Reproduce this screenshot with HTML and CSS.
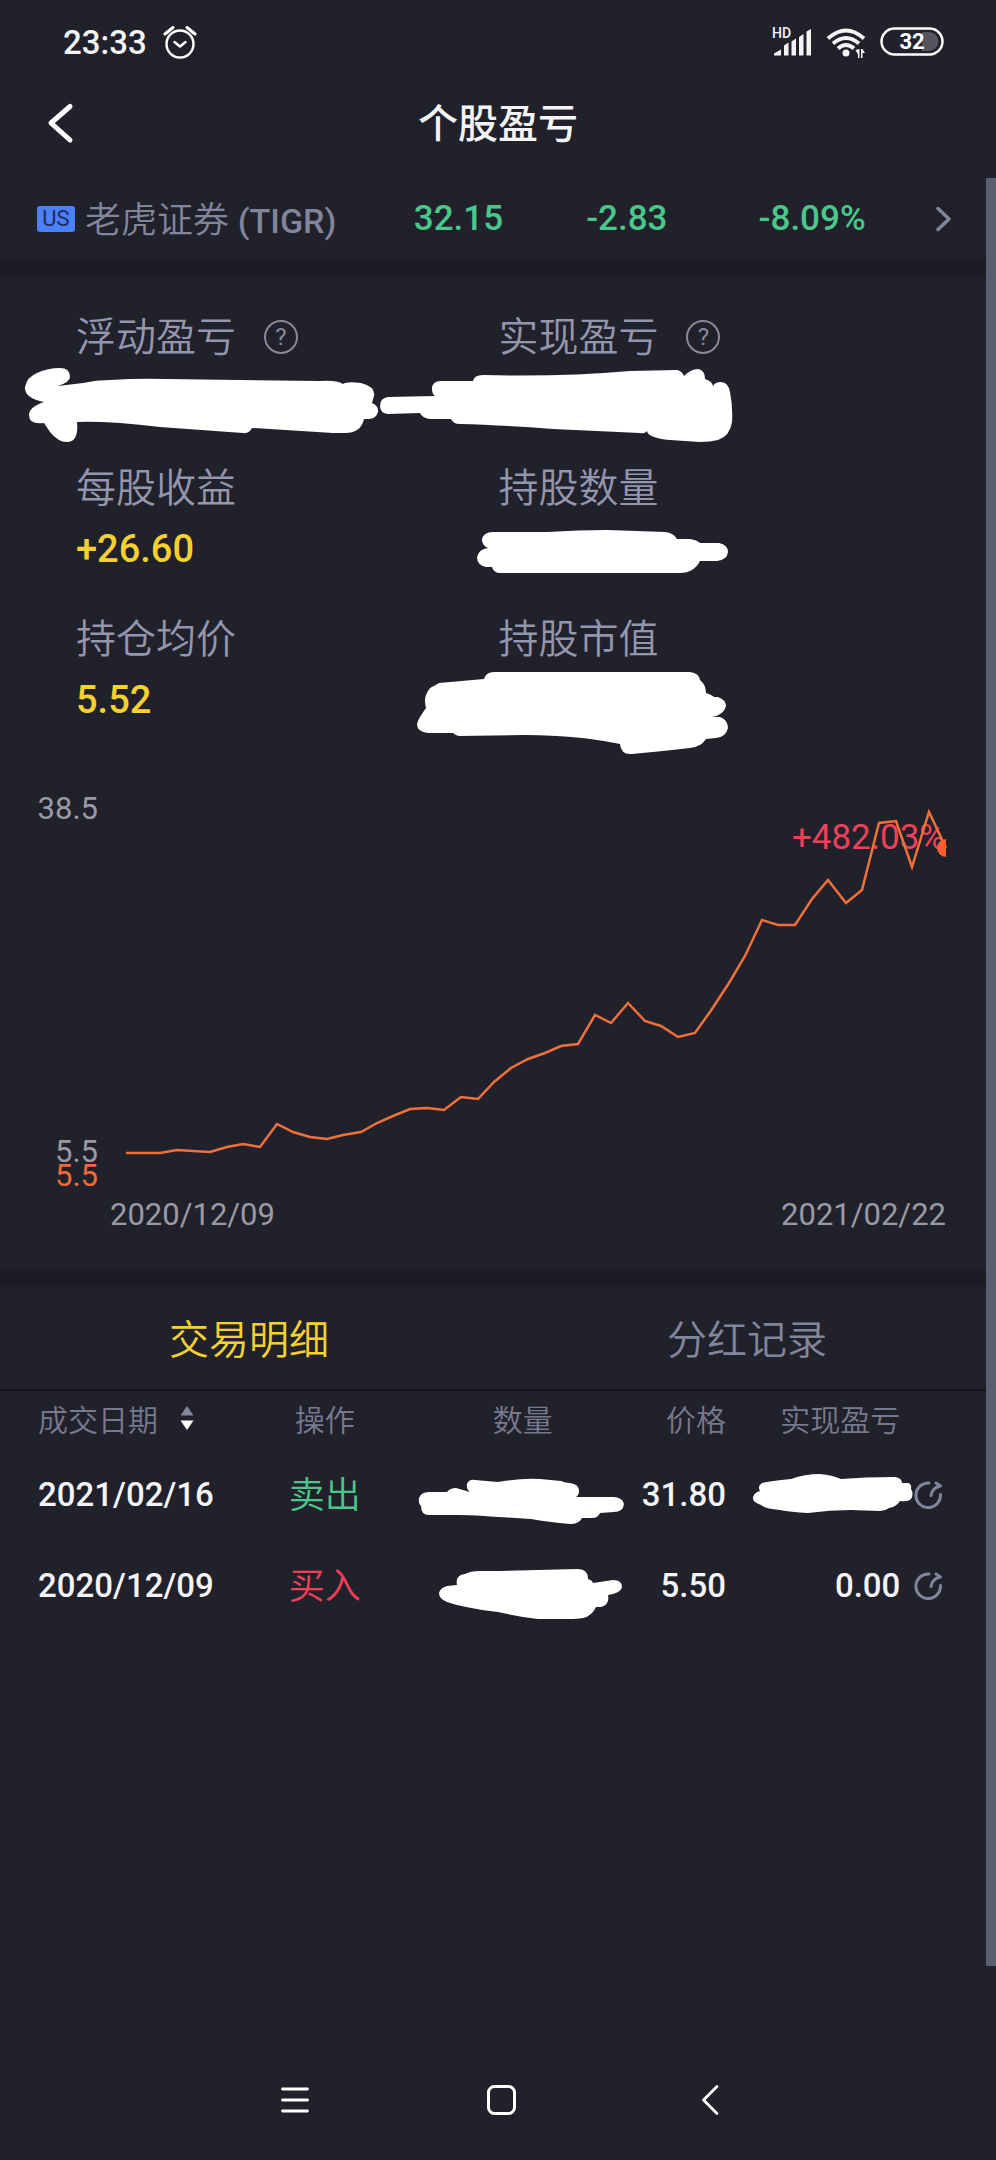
FILE: index.html
```html
<!DOCTYPE html>
<html lang="zh-CN">

	<head>
		<meta charset="UTF-8">
		<meta name="viewport" content="width=device-width, initial-scale=1">
		<title>个股盈亏</title>
		<link rel="stylesheet" href="styles.css">
	</head>

	<body>
		<!--状态栏-->
		<div class="status_bar">
			<span class="status_time">23:33</span>
			<svg class="alarm" width="34" height="34" viewBox="0 0 34 34" fill="none" stroke="#fff" stroke-width="2.4" stroke-linecap="round" stroke-linejoin="round">
				<circle cx="17" cy="19" r="13.5" />
				<path d="M11.500 17l5.500 4.500 5.500-4.500" />
				<path d="M2 9l8-6.500M32 9l-8-6.500" stroke-width="3" />
			</svg>
			<div class="status_icons">
				<svg width="40" height="32" viewBox="0 0 40 32" fill="#f4f4f4">
					<text class="hd" x="0" y="12">HD</text>
					<path d="M2 29.500v-2l7-4v6zM12 29.500v-10l4.500-3v13zM19.500 29.500v-14l4.500-3v17zM27 29.500v-18.500l4.500-3v21.500zM34.500 29.500v-24l4.500-2.500v26.500z" />
				</svg>
				<svg width="40" height="32" viewBox="0 0 40 32">
					<g fill="none" stroke="#f4f4f4" stroke-width="4">
						<path d="M2 12.500Q20 -3.500 38 12.500" />
						<path d="M7 17.500Q20 6.500 33 17.500" />
						<path d="M12 22.500Q20 15.500 28 22.500" />
					</g>
					<circle cx="20" cy="27" r="3.500" fill="#f4f4f4" />
					<path d="M29.500 24l4-1v9h-1.500v-3.500zM35 23h1.500l2.500 4h-2.500v5h-1.500z" fill="#f4f4f4" />
				</svg>
				<svg width="64" height="30" viewBox="0 0 64 30">
					<path d="M42 5h7a9.500 9.500 0 0 1 0 19h-7z" fill="#55555f" />
					<rect x="1.500" y="1.500" width="61" height="26" rx="13" fill="none" stroke="#fff" stroke-width="2.500" />
					<text class="battery" x="32" y="22">32</text>
				</svg>
			</div>
		</div>

		<!--标题栏-->
		<header class="title_bar">
			<button class="back" type="button" aria-label="返回">
				<svg width="28" height="42" viewBox="0 0 28 42" fill="none" stroke="#fff" stroke-width="5" stroke-linecap="round" stroke-linejoin="round">
					<path d="M24 4.500L5 21l19 17" />
				</svg>
			</button>
			<h1>个股盈亏</h1>
		</header>

		<main>
			<a class="stock" href="#">
				<span class="stock_name"><span class="market">US</span><span class="stock_title">老虎证券 <b>(TIGR)</b></span></span>
				<span class="quote">32.15</span>
				<span class="quote">-2.83</span>
				<span class="quote">-8.09%</span>
				<svg width="16" height="26" viewBox="0 0 16 26" fill="none" stroke="#83859b" stroke-width="3.500" stroke-linecap="round" stroke-linejoin="round">
					<path d="M3 2.500l11 10.500-11 10.500" />
				</svg>
			</a>

			<!--持仓盈亏-->
			<section class="panel">
				<dl class="stats">
					<div>
						<dt>浮动盈亏 <button class="help" type="button">?</button></dt>
						<dd>
							<svg class="mask mask_float" width="356" height="78" viewBox="24 367 356 78">
								<path d="M60 368Q70 368 70 377Q70 382 58 386L83 383Q96 380 110 380Q140 378 167 379L320 381Q337 380 343 384Q347 381 361 383Q376 387 374 396L372 403Q379 406 378 412Q376 419 369 419L364 419Q361 433 345 433L333 433L252 428Q249 434 243 433L160 427Q110 421 77 422Q79 442 67 442Q58 442 50 432L44 423Q29 425 29 415Q29 407 44 402Q24 398 25 387Q27 377 37 373Q48 368 60 368z" />
							</svg>
						</dd>
					</div>
					<div>
						<dt>实现盈亏 <button class="help" type="button">?</button></dt>
						<dd>
							<svg class="mask mask_real" width="354" height="76" viewBox="380 368 354 76">
								<path d="M388 397L435 396Q432 394 432 389Q432 381 441 381L473 381Q474 375 483 375Q560 377 630 371L677 370Q682 371 684 376Q691 369 698 369Q705 370 705 379Q712 381 713 386Q715 382 721 382Q728 382 730 392Q733 407 732 422Q730 436 718 440Q710 442 700 442L670 440Q648 438 647 431Q645 434 640 433L553 429Q500 425 460 424Q453 424 451 419L430 419Q422 418 420 413L388 414Q380 413 380 406Q380 398 388 397z" />
							</svg>
						</dd>
					</div>
					<div>
						<dt>每股收益</dt>
						<dd>+26.60</dd>
					</div>
					<div>
						<dt>持股数量</dt>
						<dd>
							<svg class="mask mask_count" width="254" height="46" viewBox="476 529 254 46">
								<path d="M488 548Q482 545 482 540Q483 532 493 532L547 532Q580 530 607 530L665 532Q674 533 677 539L690 539Q697 540 700 543L719 543Q728 545 728 552Q727 560 717 561L700 561Q694 573 680 573L657 573L500 573Q494 573 492 567L486 567Q477 565 477 557Q479 549 488 548z" />
							</svg>
						</dd>
					</div>
					<div>
						<dt>持仓均价</dt>
						<dd>5.52</dd>
					</div>
					<div>
						<dt>持股市值</dt>
						<dd>
							<svg class="mask mask_value" width="314" height="84" viewBox="416 671 314 84">
								<path d="M439 683L484 679Q486 672 494 672L690 672Q699 673 700 680Q706 685 706 693Q712 695 714 697L718 697Q726 700 726 706Q724 715 712 717L720 717Q728 720 728 728Q726 737 716 738L706 739Q701 747 690 748L663 751L632 754Q621 755 620 744Q585 737 557 736Q540 735 525 735L459 736Q456 736 453 733L428 733Q417 732 417 724Q418 719 426 708Q424 700 426 695Q429 687 434 686z" />
							</svg>
						</dd>
					</div>
				</dl>

				<!--收益走势-->
				<svg class="chart" viewBox="0 0 996 501">
					<g class="chart_label">
						<text x="98" y="49" text-anchor="end">38.5</text>
						<text x="98" y="392" text-anchor="end">5.5</text>
						<text class="cost" x="98" y="416" text-anchor="end">5.5</text>
						<text x="110" y="455">2020/12/09</text>
						<text x="946" y="455" text-anchor="end">2021/02/22</text>
					</g>
					<text class="rate" x="945" y="79" text-anchor="end">+482.03%</text>
					<polyline class="line" points="126,383 143,383 160,383 177,380 193,381 210,382 227,377 243,374 260,377 277,354 293,362 310,367 327,369 343,365 361,362 377,353 393,346 410,339 427,338 444,340 461,327 478,329 494,312 511,298 528,289 545,283 561,276 578,274 595,245 611,253 628,233 645,251 661,256 678,267 695,263 712,239 729,213 745,186 762,150 778,155 795,155 812,129 828,110 846,133 862,120 879,53 896,51 912,97 929,42 946,78" />
					<path class="dot" d="M946 69a9 9 0 0 0 0 18z" />
				</svg>
			</section>

			<!--交易记录-->
			<section class="panel records">
				<div class="tabs">
					<button class="tab active" type="button">交易明细</button>
					<button class="tab" type="button">分红记录</button>
				</div>
				<table>
					<thead>
						<tr>
							<th class="col_date">成交日期
								<svg class="sort" width="14" height="26" viewBox="0 0 14 26">
									<path d="M7 1l6.500 9.500h-13z" fill="#83859b" />
									<path d="M7 25l6.500-9.500h-13z" fill="#fff" />
								</svg>
							</th>
							<th class="col_type">操作</th>
							<th class="col_num">数量</th>
							<th class="col_price">价格</th>
							<th class="col_profit">实现盈亏</th>
							<th class="col_more"></th>
						</tr>
					</thead>
					<tbody>
						<tr>
							<td class="col_date">2021/02/16</td>
							<td class="col_type sell">卖出</td>
							<td class="col_num">
								<svg class="mask mask_sell_num" width="208" height="48" viewBox="418 1478 208 48">
									<path d="M447 1492Q450 1488 456 1488L470 1492Q466 1489 467 1484Q469 1479 475 1480L498 1482Q520 1478 540 1479L561 1481Q565 1483 570 1483Q579 1484 579 1491Q579 1495 576 1497L614 1497Q623 1498 624 1504Q623 1512 614 1512L600 1513Q598 1518 592 1518L582 1518Q579 1524 570 1524Q548 1522 531 1519Q515 1518 498 1517Q475 1515 460 1515L429 1515Q421 1515 421 1506Q418 1503 419 1498Q421 1492 429 1492z" />
								</svg>
							</td>
							<td class="col_price">31.80</td>
							<td class="col_profit">
								<svg class="mask mask_sell_profit" width="162" height="41" viewBox="752 1473 162 41">
									<path d="M760 1491Q757 1486 762 1483Q770 1481 791 1479Q805 1474 820 1474Q832 1475 841 1479Q865 1477 895 1477Q902 1478 902 1483L908 1483Q912 1484 911 1489Q914 1494 911 1499Q908 1502 900 1501Q896 1507 889 1508Q885 1511 880 1511L851 1510Q830 1510 808 1513Q790 1512 780 1510Q765 1509 761 1505Q752 1502 753 1497Q755 1492 760 1491z" />
								</svg>
							</td>
							<td class="col_more">
								<button class="more" type="button" aria-label="查看">
									<svg width="28" height="28" viewBox="0 0 28 28" fill="none" stroke="#83859b" stroke-width="3" stroke-linecap="round" stroke-linejoin="round">
										<path d="M15 2A12.300 12.300 0 1 0 26.500 13.500" />
										<path d="M17 14.500Q18 7 26 5M22 2l4.500 3" />
									</svg>
								</button>
							</td>
						</tr>
						<tr>
							<td class="col_date">2020/12/09</td>
							<td class="col_type buy">买入</td>
							<td class="col_num">
								<svg class="mask mask_buy_num" width="186" height="52" viewBox="438 1568 186 52">
									<path d="M447 1586L457 1585Q455 1575 465 1574Q470 1571 480 1571L498 1571L578 1569Q588 1569 588 1579Q592 1580 593 1583L613 1580Q622 1580 622 1587Q621 1592 613 1594L608 1595Q610 1605 601 1607L596 1607Q592 1616 583 1618Q575 1619 571 1619L538 1619Q520 1617 498 1612Q465 1608 447 1602Q439 1599 439 1593Q440 1588 447 1586z" />
								</svg>
							</td>
							<td class="col_price">5.50</td>
							<td class="col_profit">0.00</td>
							<td class="col_more">
								<button class="more" type="button" aria-label="查看">
									<svg width="28" height="28" viewBox="0 0 28 28" fill="none" stroke="#83859b" stroke-width="3" stroke-linecap="round" stroke-linejoin="round">
										<path d="M15 2A12.300 12.300 0 1 0 26.500 13.500" />
										<path d="M17 14.500Q18 7 26 5M22 2l4.500 3" />
									</svg>
								</button>
							</td>
						</tr>
					</tbody>
				</table>
			</section>
			<div class="scroll_thumb"></div>
		</main>

		<!--系统导航-->
		<nav class="nav_bar">
			<button type="button" aria-label="菜单">
				<svg width="30" height="32" viewBox="0 0 30 32" stroke="#fff" stroke-width="2.800" stroke-linecap="round">
					<path d="M2.500 5h25M2.500 16h25M2.500 27h25" />
				</svg>
			</button>
			<button type="button" aria-label="主页">
				<svg width="30" height="32" viewBox="0 0 30 32" fill="none" stroke="#fff" stroke-width="3">
					<rect x="1.500" y="2.500" width="26" height="27" rx="6" />
				</svg>
			</button>
			<button type="button" aria-label="后退">
				<svg width="30" height="32" viewBox="0 0 30 32" fill="none" stroke="#fff" stroke-width="2.800" stroke-linecap="round" stroke-linejoin="round">
					<path d="M22 2.500L8.500 16 22 29.500" />
				</svg>
			</button>
		</nav>
	</body>

</html>
```
FILE: styles.css
```css
* {
	box-sizing: border-box;
}

body {
	margin: 0;
	min-height: 100vh;
	display: flex;
	flex-direction: column;
	background-color: #21212b;
	color: #f4f4f6;
	font-family: Roboto, "Noto Sans CJK SC", sans-serif;
}

button {
	padding: 0;
	border: none;
	background: transparent;
	color: inherit;
	font-family: inherit;
	cursor: pointer;
}

svg {
	display: block;
}

/*状态栏*/

.status_bar {
	display: flex;
	align-items: center;
	height: 68px;
	padding: 16px 52px 0 63px;
}

.status_time {
	font-size: 33px;
	font-weight: 500;
}

.alarm {
	margin-left: 16px;
}

.status_icons {
	display: flex;
	align-items: center;
	gap: 14px;
	margin-left: auto;
}

.hd {
	font-size: 14px;
	font-weight: 500;
}

.battery {
	fill: #fff;
	font-size: 22px;
	font-weight: 700;
	text-anchor: middle;
}

/*标题栏*/

.title_bar {
	display: grid;
	grid-template-columns: 1fr auto 1fr;
	align-items: center;
	height: 110px;
	padding: 0 46px;
}

.back {
	justify-self: start;
}

h1 {
	margin: 0;
	padding-top: 4px;
	font-size: 40px;
	font-weight: 500;
	line-height: 60px;
}

/*内容区*/

main {
	position: relative;
	flex: 1;
}

.scroll_thumb {
	position: absolute;
	top: 0;
	right: 0;
	width: 10px;
	height: 96%;
	background-color: #5c5e70;
}

.stock {
	display: grid;
	grid-template-columns: 376fr 172fr 172fr 176fr 16px;
	align-items: center;
	height: 81px;
	padding: 0 45px 0 37px;
	color: #83859b;
	text-decoration: none;
}

.stock_name {
	display: flex;
	align-items: center;
	gap: 10px;
	font-size: 36px;
	font-weight: 350;
	white-space: nowrap;
}

.stock_title {
	padding-bottom: 4px;
}

.stock_name b {
	font-size: 34px;
	font-weight: 500;
}

.market {
	width: 38px;
	border-radius: 3px;
	background-color: #4a80fa;
	color: #1d2b5c;
	font-size: 22px;
	font-weight: 400;
	line-height: 26px;
	text-align: center;
}

.quote {
	color: #4bc78b;
	font-size: 35px;
	font-weight: 500;
}

.panel {
	border-top: 16px solid #1b1b23;
}

/*持仓数据*/

.stats {
	display: grid;
	grid-template-columns: 422fr 497fr;
	row-gap: 29px;
	margin: 0;
	padding: 32px 0 39px 76px;
}

dt {
	display: flex;
	align-items: center;
	gap: 28px;
	color: #9496ad;
	font-size: 40px;
	font-weight: 350;
	line-height: 62px;
}

dd {
	position: relative;
	height: 60px;
	margin: 0;
	color: #f5d130;
	font-size: 38px;
	font-weight: 500;
	line-height: 58px;
}

.help {
	width: 34px;
	height: 34px;
	margin-bottom: 2px;
	border: 2px solid #8a889c;
	border-radius: 50%;
	color: #8a889c;
	font-size: 24px;
	line-height: 30px;
}

/*手涂遮挡，盖在数值上面*/

.mask {
	position: absolute;
	fill: #fff;
}

.mask_float {
	top: -2px;
	left: -52px;
}

.mask_real {
	top: -1px;
	left: -118px;
}

.mask_count {
	top: 9px;
	left: -22px;
}

.mask_value {
	top: 0;
	left: -82px;
}

.mask_sell_num {
	top: 29px;
	left: 19px;
}

.mask_sell_profit {
	top: 24px;
	left: 26px;
}

.mask_buy_num {
	top: 28px;
	left: 39px;
}

/*走势图*/

.chart {
	width: 100%;
}

.chart_label {
	fill: #9a9aa4;
	font-size: 31px;
}

.chart_label .cost {
	fill: #ee6a3a;
}

.rate {
	fill: #ee4058;
	font-size: 35px;
}

.line {
	fill: none;
	stroke: #f0703c;
	stroke-width: 2.5;
}

.dot {
	fill: #ff5a30;
}

/*交易记录*/

.tabs {
	display: flex;
	border-bottom: 2px solid #14141b;
}

.tab {
	flex: 1;
	height: 102px;
	padding-bottom: 3px;
	color: #83859b;
	font-size: 40px;
	font-weight: 350;
}

.tab.active {
	color: #f5d130;
}

table {
	width: 100%;
	table-layout: fixed;
	border-collapse: collapse;
}

th {
	height: 58px;
	padding: 0 0 4px;
	color: #77798f;
	font-size: 30px;
	font-weight: 350;
	text-align: right;
	white-space: nowrap;
}

td {
	position: relative;
	height: 91px;
	padding: 0;
	font-size: 33px;
	font-weight: 500;
	text-align: right;
}

.col_date {
	width: 25.1%;
	padding-left: 38px;
	text-align: left;
}

.col_type {
	width: 15%;
	text-align: center;
}

td.col_type {
	padding-bottom: 5px;
	font-size: 36px;
	font-weight: 350;
}

.col_num {
	width: 15.4%;
}

.col_price {
	width: 17.4%;
}

.col_profit {
	width: 17.5%;
}

.col_more {
	width: 9.6%;
	padding-left: 14px;
	text-align: left;
}

.sort {
	display: inline-block;
	margin-left: 15px;
}

.sell {
	color: #4bc78b;
}

.buy {
	color: #ee4058;
}

.more {
	display: block;
}

/*系统导航*/

.nav_bar {
	display: flex;
	align-items: center;
	justify-content: space-between;
	height: 120px;
	padding: 0 27.2% 0 28.1%;
}
```
